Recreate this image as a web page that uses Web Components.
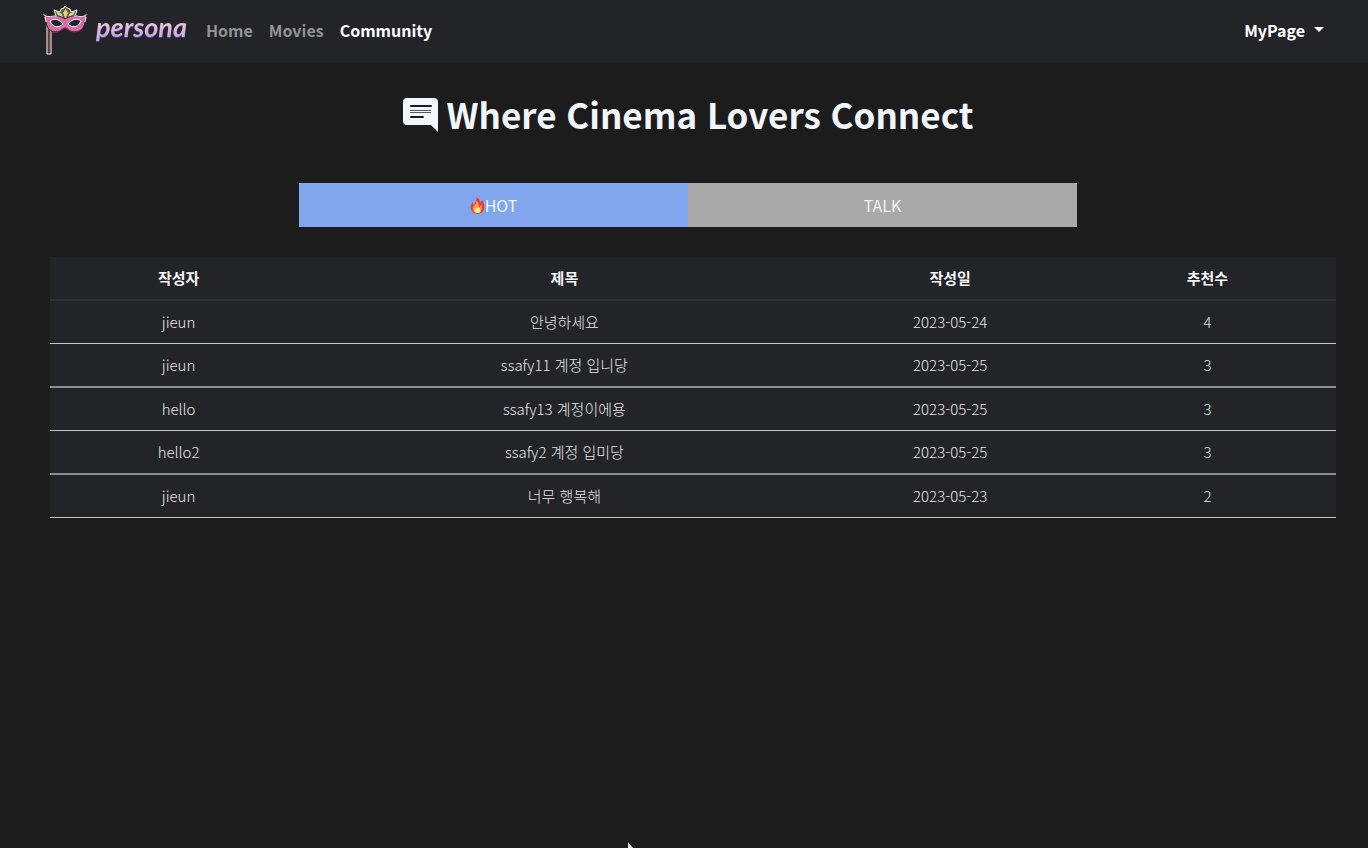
<!DOCTYPE html>
<html lang="ko">
<head>
<meta charset="utf-8">
<meta name="viewport" content="width=device-width, initial-scale=1">
<title>persona | Community</title>
<style>
  body {
    margin: 0;
    min-height: 100vh;
    overflow-x: hidden;
    background: #1c1c1d;
    color: #f1f6fc;
    font-family: "Noto Sans CJK KR", "Noto Sans", sans-serif;
  }
</style>
</head>
<body>
<persona-app></persona-app>
<script>
class PersonaLogo extends HTMLElement {
  constructor() {
    super();
    this.attachShadow({ mode: "open" }).innerHTML = `
      <style>
        :host { display: block; }
        a { display: flex; align-items: center; gap: 8px; text-decoration: none; }
        svg { display: block; width: 46px; height: 52px; }
        span {
          font: italic 700 27px/36px Lato, sans-serif;
          padding: 0 1px 8px 0;
          background: linear-gradient(#eec3d6 32%, #bda4dc 70%);
          -webkit-background-clip: text;
          background-clip: text;
          color: transparent;
          filter: drop-shadow(0 1px 0 #4a45a8);
        }
      </style>
      <a href="#home">
        <svg viewBox="0 0 46 52" aria-hidden="true">
          <path d="M5 19v30h4V20" fill="#3b292b" stroke="#fff" stroke-width="1"/>
          <path d="M7 22v25" stroke="#8d6056" stroke-width="1"/>
          <path d="M14 11L12 5l6 2 1-3 3-1 1-2 2 2 3 1 1 3 6-2-2 6-4 3H18Z" fill="#51634c" stroke="#fff"/>
          <path d="M14 6l6 3 1 4-5-2ZM33 6l-6 3-1 4 5-2Z" fill="#c8db9a"/>
          <path d="M23.500 3l3 5-3 7-3-7Z" fill="#e8cf78" stroke="#6b5630"/>
          <path d="M2 9c3 3 6 3 10 2 4-1 8 1 11 3 4-2 7-4 12-3 4 1 7 0 10-2 0 4-2 6-2 8-1 7-5 10-11 10-4 0-6-3-9-4-3 1-5 4-9 4C8 27 5 23 4 17c-1-3-2-4-2-8Z" fill="#d66ea6" stroke="#2c151e" stroke-width="1"/>
          <path d="M1 9c3 3 6 3 11 2l3 0M45 9c-3 3-6 3-10 2h-3M3 12l1 5M44 12l-1 5" fill="none" stroke="#fff" stroke-width="1"/>
          <path d="M10 27c6 2 9-2 13-4 4 2 8 6 14 3" fill="none" stroke="#84264f" stroke-width="1"/>
          <path d="M8 16c4-3 9-2 13 3-4 4-10 4-13-3ZM39 16c-4-3-9-2-13 3 4 4 10 4 13-3Z" fill="#232428" stroke="#fff" stroke-width="1"/>
        </svg>
        <span>persona</span>
      </a>`;
  }
}

class NavItem extends HTMLElement {
  constructor() {
    super();
    this.attachShadow({ mode: "open" }).innerHTML = `
      <style>
        :host { display: block; }
        a { display: block; padding: 0 8px 2px; font-size: 16px; line-height: 26px; font-weight: 700; color: #929396; text-decoration: none; }
        :host([active]) a { color: #fff; }
      </style>
      <a href="#"><slot></slot></a>`;
  }
}

class MyPageMenu extends HTMLElement {
  constructor() {
    super();
    this.attachShadow({ mode: "open" }).innerHTML = `
      <style>
        :host { display: block; }
        button { display: flex; align-items: center; gap: 9px; margin: 0; padding: 0 0 2px; border: 0; background: none; color: #fff; font: inherit; font-size: 16px; line-height: 26px; font-weight: 700; cursor: pointer; }
        i { border: 5px solid transparent; border-top-color: #fff; border-bottom: 0; }
      </style>
      <button type="button" aria-haspopup="true"><slot></slot><i></i></button>`;
  }
}

class SiteNav extends HTMLElement {
  constructor() {
    super();
    this.attachShadow({ mode: "open" }).innerHTML = `
      <style>
        :host { display: block; background: #232428; }
        nav { display: flex; align-items: center; min-height: 63px; padding: 0 44px 2px 42px; box-sizing: border-box; }
        .links { display: flex; margin-left: 10px; flex: 1; }
      </style>
      <nav>
        <persona-logo></persona-logo>
        <div class="links">
          <nav-item>Home</nav-item>
          <nav-item>Movies</nav-item>
          <nav-item active>Community</nav-item>
        </div>
        <my-page-menu>MyPage</my-page-menu>
      </nav>`;
  }
}

class PageTitle extends HTMLElement {
  constructor() {
    super();
    this.attachShadow({ mode: "open" }).innerHTML = `
      <style>
        :host { display: block; }
        h1 { display: flex; justify-content: center; align-items: center; gap: 8px; margin: 0; font-size: 35px; line-height: 48px; font-weight: 700; }
        svg { display: block; width: 36px; height: 36px; }
      </style>
      <h1>
        <svg viewBox="0 0 36 36" aria-hidden="true">
          <path d="M4 2h27a4 4 0 0 1 4 4v30l-7-7H4a4 4 0 0 1-4-4V6a4 4 0 0 1 4-4Z" fill="#f1f6fc"/>
          <path d="M8 10h20M8 21h12" stroke="#1c1c1d" stroke-width="2" stroke-linecap="round"/>
          <path d="M7 14.500h21M7 16.500h21" stroke="#55585c" stroke-width="1"/>
        </svg>
        <slot></slot>
      </h1>`;
  }
}

class BoardTabs extends HTMLElement {
  constructor() {
    super();
    this.attachShadow({ mode: "open" }).innerHTML = `
      <style>
        :host { display: block; }
        div { display: grid; grid-template-columns: 1fr 1fr; }
        button { display: flex; align-items: center; justify-content: center; padding: 9px 0; border: 0; background: #a9a9a9; color: #f1f6fc; font: inherit; font-size: 16px; line-height: 26px; cursor: pointer; }
        button[aria-selected="true"] { background: #81a6ee; }
        svg { display: block; width: 15px; height: 17px; }
      </style>
      <div role="tablist">
        <button type="button" role="tab" aria-selected="true">
          <svg viewBox="0 0 16 18" aria-hidden="true">
            <path d="M7 0c3 2 4 4 4 6l2-3c2 4 3 7 2 10-1 3-4 5-7 5s-6-2-7-5C0 10 1 8 3 5l1 4c2-3 3-6 3-9Z" fill="#e8412d"/>
            <path d="M7 4c3 3 2 5 3 7l2-3c2 6-1 9-4 9s-5-2-5-5c0-2 4-4 4-8Z" fill="#f79a50"/>
            <circle cx="8" cy="14" r="3" fill="#ffed87"/>
          </svg>HOT</button>
        <button type="button" role="tab" aria-selected="false">TALK</button>
      </div>`;
  }
}

class PostTable extends HTMLElement {
  constructor() {
    super();
    const posts = [
      ["jieun", "안녕하세요", "2023-05-24", "4"],
      ["jieun", "ssafy11 계정 입니당", "2023-05-25", "3"],
      ["hello", "ssafy13 계정이에용", "2023-05-25", "3"],
      ["hello2", "ssafy2 계정 입미당", "2023-05-25", "3"],
      ["jieun", "너무 행복해", "2023-05-23", "2"]
    ];
    const rows = posts.map(p => `<tr>${p.map(c => `<td>${c}</td>`).join("")}</tr>`).join("");
    this.attachShadow({ mode: "open" }).innerHTML = `
      <style>
        :host { display: block; }
        table { width: 100%; table-layout: fixed; border-spacing: 0; background: #232428; text-align: center; font-size: 15px; line-height: 26px; }
        th { width: 20%; font-weight: 700; color: #f4f5f6; border-bottom: 2px solid #2e3033; }
        .title { width: 40%; }
        th, td { padding: 8px 0; }
        td { font-weight: 300; color: #e6e7e9; border-bottom: 1px solid #c4c6c8; }
        tr:nth-child(even) td { border-bottom: 2px solid #8d8e92; }
      </style>
      <table>
        <thead><tr><th>작성자</th><th class="title">제목</th><th>작성일</th><th>추천수</th></tr></thead>
        <tbody>${rows}</tbody>
      </table>`;
  }
}

class MousePointer extends HTMLElement {
  constructor() {
    super();
    this.attachShadow({ mode: "open" }).innerHTML = `
      <style>
        :host { position: fixed; left: 46%; bottom: 0; width: 6px; height: 6px; margin-left: -1px; pointer-events: none; }
        svg { display: block; }
      </style>
      <svg width="6" height="6" viewBox="0 0 6 6" aria-hidden="true"><path d="M0 0v6h5Z" fill="#e4e4e4"/></svg>`;
  }
}

class PersonaApp extends HTMLElement {
  constructor() {
    super();
    this.attachShadow({ mode: "open" }).innerHTML = `
      <style>
        :host { display: block; }
        main { padding: 27px 32px 32px 50px; }
        .intro { display: grid; gap: 45px; padding: 0 10px 30px 0; }
        board-tabs { width: 100%; max-width: 778px; justify-self: center; }
      </style>
      <site-nav></site-nav>
      <main>
        <div class="intro">
          <page-title>Where Cinema Lovers Connect</page-title>
          <board-tabs></board-tabs>
        </div>
        <post-table></post-table>
      </main>
      <mouse-pointer></mouse-pointer>`;
  }
}

customElements.define("persona-logo", PersonaLogo);
customElements.define("nav-item", NavItem);
customElements.define("my-page-menu", MyPageMenu);
customElements.define("site-nav", SiteNav);
customElements.define("page-title", PageTitle);
customElements.define("board-tabs", BoardTabs);
customElements.define("post-table", PostTable);
customElements.define("mouse-pointer", MousePointer);
customElements.define("persona-app", PersonaApp);
</script>
</body>
</html>
